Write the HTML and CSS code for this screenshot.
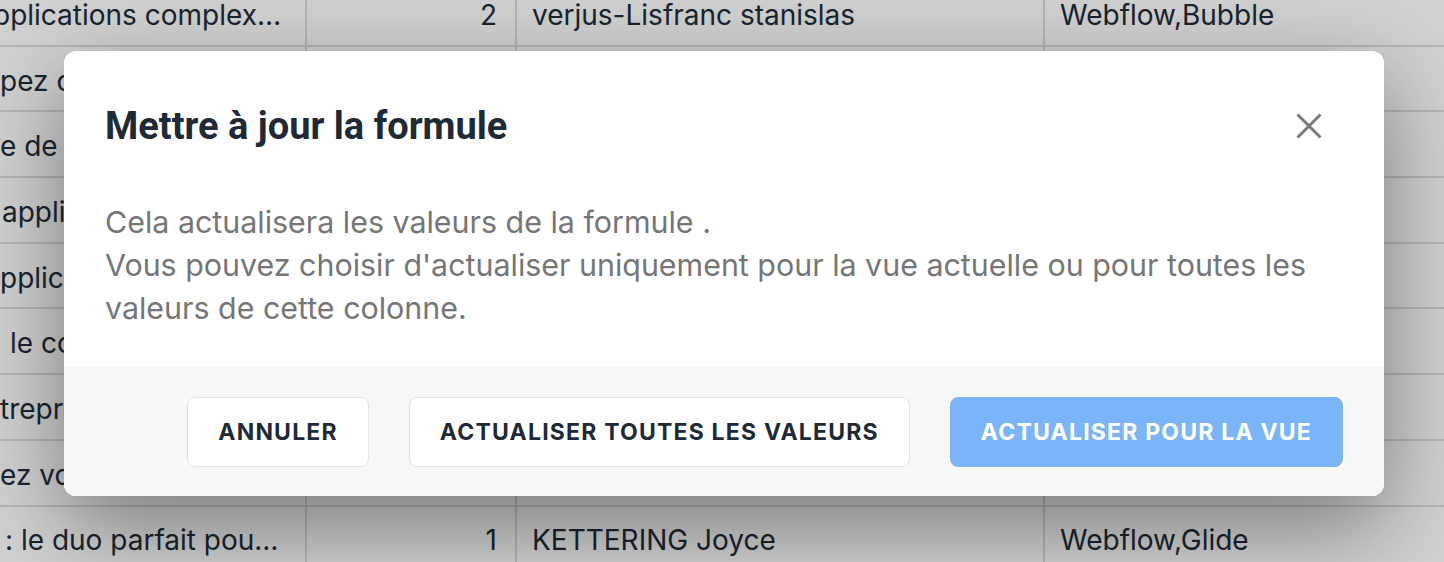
FILE: index.html
```html
<!DOCTYPE html>
<html lang="fr">
<head>
<meta charset="utf-8">
<title>Mettre à jour la formule</title>
<link rel="stylesheet" href="styles.css">
</head>
<body>
<div class="page">
  <div class="table">
    <div class="row">
      <div class="cell c1"><span class="shift7">pplications complex…</span></div>
      <div class="cell c2">2</div>
      <div class="cell c3">verjus-Lisfranc stanislas</div>
      <div class="cell c4">Webflow,Bubble</div>
    </div>
    <div class="row">
      <div class="cell c1">pez des outils no-code…</div>
      <div class="cell c2">3</div>
      <div class="cell c3">MARTIN Claire</div>
      <div class="cell c4">Bubble</div>
    </div>
    <div class="row">
      <div class="cell c1">e de votre entreprise…</div>
      <div class="cell c2">1</div>
      <div class="cell c3">DUPONT Marc</div>
      <div class="cell c4">Glide</div>
    </div>
    <div class="row">
      <div class="cell c1 ind2">applications métier…</div>
      <div class="cell c2">4</div>
      <div class="cell c3">BERNARD Julie</div>
      <div class="cell c4">Webflow</div>
    </div>
    <div class="row">
      <div class="cell c1">pplications mobiles…</div>
      <div class="cell c2">2</div>
      <div class="cell c3">PETIT Thomas</div>
      <div class="cell c4">Adalo</div>
    </div>
    <div class="row">
      <div class="cell c1 ind10">le continu numérique…</div>
      <div class="cell c2">1</div>
      <div class="cell c3">ROUX Élodie</div>
      <div class="cell c4">Airtable</div>
    </div>
    <div class="row">
      <div class="cell c1">trepreneurs pressés…</div>
      <div class="cell c2">5</div>
      <div class="cell c3">MOREAU Lucas</div>
      <div class="cell c4">Bubble,Glide</div>
    </div>
    <div class="row">
      <div class="cell c1">ez vos processus…</div>
      <div class="cell c2">2</div>
      <div class="cell c3">LEROY Sophie</div>
      <div class="cell c4">Webflow</div>
    </div>
    <div class="row">
      <div class="cell c1 ind5">: le duo parfait pou…</div>
      <div class="cell c2">1</div>
      <div class="cell c3">KETTERING Joyce</div>
      <div class="cell c4">Webflow,Glide</div>
    </div>
  </div>

  <div class="backdrop"></div>

  <div class="modal" role="dialog" aria-labelledby="mtitle">
    <div class="modal-header">
      <h2 id="mtitle" class="modal-title">Mettre à jour la formule</h2>
      <button class="close" aria-label="Fermer">
        <svg width="26" height="26" viewBox="0 0 26 26"><path d="M1.5 1.5 L24.5 24.5 M24.5 1.5 L1.5 24.5" stroke="#7b7b7b" stroke-width="3" fill="none"/></svg>
      </button>
    </div>
    <div class="modal-body">
      <p>Cela actualisera les valeurs de la formule .</p>
      <p>Vous pouvez choisir d'actualiser uniquement pour la vue actuelle ou pour toutes les valeurs de cette colonne.</p>
    </div>
    <div class="modal-footer">
      <button class="btn">ANNULER</button>
      <button class="btn">ACTUALISER TOUTES LES VALEURS</button>
      <button class="btn btn-primary">ACTUALISER POUR LA VUE</button>
    </div>
  </div>
</div>
</body>
</html>
```

FILE: styles.css
```css
* { box-sizing: border-box; }
html, body { margin: 0; padding: 0; }
body {
  width: 1444px;
  height: 562px;
  overflow: hidden;
  font-family: Inter, "Noto Sans", sans-serif;
  background: #ffffff;
}
.page {
  position: relative;
  width: 1444px;
  height: 562px;
  overflow: hidden;
}
.table {
  margin-top: -19px;
  display: flex;
  flex-direction: column;
}
.row {
  display: grid;
  grid-template-columns: 307px 210px 528px 1fr;
  height: 65.7px;
  border-bottom: 2px solid #dddddd;
}
.cell {
  font-size: 28px;
  color: #202d3a;
  display: flex;
  align-items: center;
  white-space: nowrap;
  overflow: hidden;
  padding-top: 4px;
  border-right: 2px solid #dddddd;
}
.c1 { padding-left: 0; }
.c1.ind2 { padding-left: 2px; }
.c1.ind5 { padding-left: 5px; }
.c1.ind10 { padding-left: 10px; }
.shift7 { margin-left: -7px; }
.c2 { justify-content: flex-end; padding-right: 18px; }
.c3 { padding-left: 15px; }
.c4 { padding-left: 15px; border-right: none; }

.backdrop {
  position: absolute;
  inset: 0;
  background: rgba(0, 0, 0, 0.18);
}

.modal {
  position: absolute;
  left: 64px;
  top: 51px;
  width: 1320px;
  height: 445px;
  background: #ffffff;
  border-radius: 12px;
  overflow: hidden;
  display: flex;
  flex-direction: column;
  box-shadow: 0 30px 90px rgba(0, 0, 0, 0.42);
}
.modal-header {
  display: flex;
  justify-content: space-between;
  align-items: flex-start;
  padding: 56px 62px 0 41px;
  height: 150px;
  flex: none;
}
.modal-title {
  margin: 0;
  font-family: Roboto, "Liberation Sans", sans-serif;
  font-weight: 700;
  font-size: 38px;
  line-height: 38px;
  color: #1e2a36;
}
.close {
  border: none;
  background: none;
  padding: 0;
  margin-top: 6px;
  width: 26px;
  height: 26px;
  display: block;
  cursor: pointer;
}
.close svg { display: block; }
.modal-body {
  flex: 1;
  padding: 0 41px;
  font-size: 30.4px;
  line-height: 43px;
  color: #767676;
}
.modal-body p { margin: 0; }
.modal-footer {
  flex: none;
  height: 129px;
  background: #f7f7f7;
  display: flex;
  justify-content: flex-end;
  align-items: center;
  gap: 40px;
  padding: 0 41px;
}
.btn {
  height: 70px;
  padding: 0 30px;
  border: 1px solid #e3e3e3;
  border-radius: 8px;
  background: #ffffff;
  font-family: Inter, "Noto Sans", sans-serif;
  font-weight: 700;
  font-size: 23px;
  letter-spacing: 1.2px;
  color: #1e2a36;
  cursor: pointer;
}
.btn-primary {
  background: #7bb4f8;
  border-color: #7bb4f8;
  color: #ffffff;
}
```
